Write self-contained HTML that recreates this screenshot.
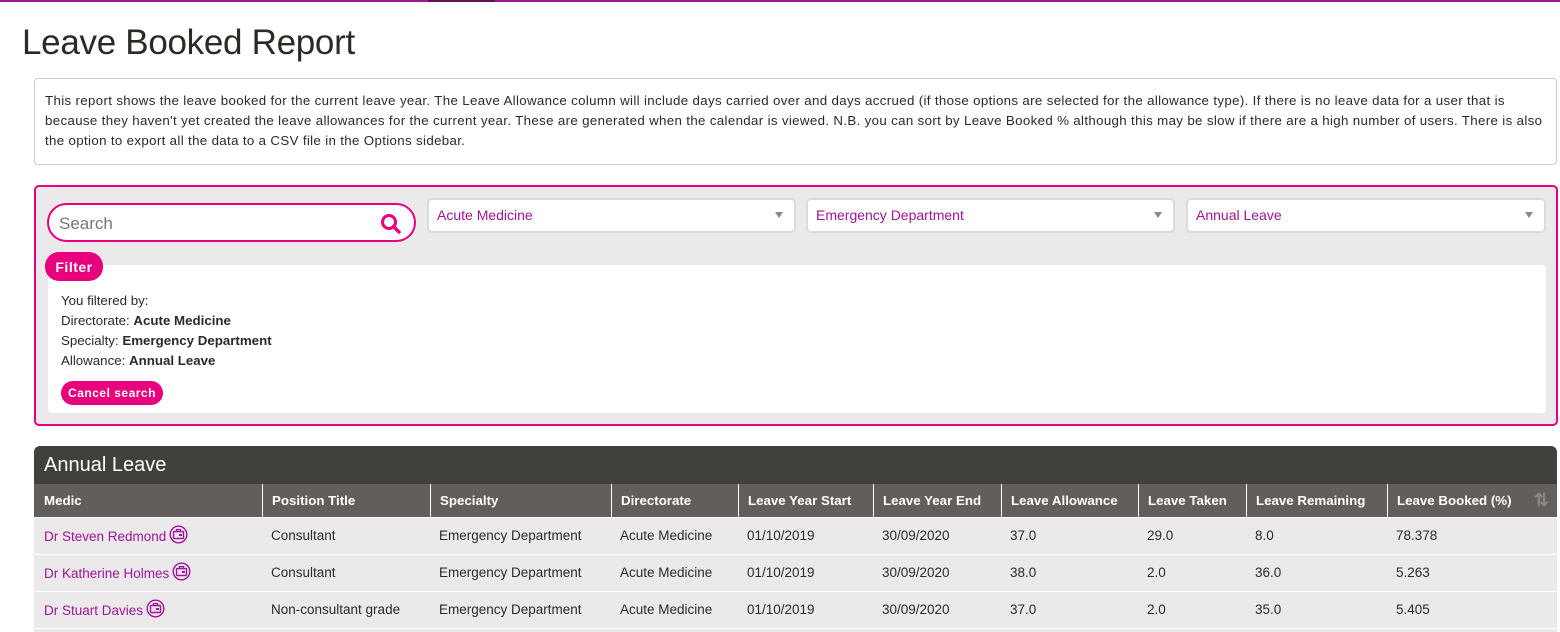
<!DOCTYPE html>
<html><head><meta charset="utf-8"><style>
*{box-sizing:border-box;margin:0;padding:0}
html,body{width:1560px;height:632px;overflow:hidden}
body{background:#fff;font-family:"Liberation Sans",sans-serif;color:#2b2a26;position:relative}
.top{position:absolute;left:0;top:0;width:1560px;height:2px;background:#9a1a94}
.top2{position:absolute;left:428px;top:0;width:67px;height:2px;background:#5a1456}
h1{position:absolute;left:22px;top:23px;font-weight:normal;font-size:35px;color:#2b2a26;letter-spacing:-0.3px}
.info{position:absolute;left:34px;top:78px;width:1523px;height:87px;border:1px solid #ccc;border-radius:4px;padding:12px 10px;font-size:13.3px;letter-spacing:0.34px;line-height:20px;color:#2b2a26}
.filt{position:absolute;left:34px;top:185px;width:1524px;height:241px;border:2px solid #e8007d;border-radius:5px;background:#ebe9ea}
.search{position:absolute;left:11px;top:16px;width:369px;height:39px;border:2px solid #e8007d;border-radius:20px;background:#fff;font-size:17px;color:#777;padding:9px 10px}
.sel{position:absolute;top:11px;height:35px;border:2px solid #dcdcdc;border-radius:5px;background:#fff;color:#a0149a;font-size:14px;padding:7px 8px}
.sel:after{content:"";position:absolute;right:11px;top:12px;border-left:4px solid transparent;border-right:4px solid transparent;border-top:6px solid #888}
.res{position:absolute;left:12px;top:78px;width:1498px;height:148px;background:#fff;border-radius:4px;font-size:13.3px;line-height:20px;padding:26px 13px}
.btn{position:absolute;background:#e8007d;color:#fff;border-radius:14px;font-weight:bold;letter-spacing:.5px}
.tbl{position:absolute;left:34px;top:446px;width:1523px}
.hd{height:38px;background:#42403d;border-radius:6px 6px 0 0;color:#fff;font-size:20px;padding:8px 10px}
.row{display:flex;height:37px;background:#ebe9ea;border-bottom:1px solid #fff;font-size:13.5px}
.row div{padding:10px 9px 0}
.ch{height:34px;background:#625e5b;color:#fff;font-weight:bold;font-size:13.3px}
.ch div{border-left:1px solid #fff;padding-top:9px}
.ch div:first-child{border-left:0}
.row div:first-child{padding-left:10px;padding-top:7px}
a{color:#a0149a;text-decoration:none}
.ic{display:inline-block;vertical-align:-3px;margin-left:3px}
</style></head><body>
<div class="top"></div><div class="top2"></div>
<h1>Leave Booked Report</h1>
<div class="info">This report shows the leave booked for the current leave year. The Leave Allowance column will include days carried over and days accrued (if those options are selected for the allowance type). If there is no leave data for a user that is because they haven't yet created the leave allowances for the current year. These are generated when the calendar is viewed. N.B. you can sort by Leave Booked % although this may be slow if there are a high number of users. There is also the option to export all the data to a CSV file in the Options sidebar.</div>
<div class="filt">
<div class="search">Search<svg style="position:absolute;right:12px;top:8px" width="22" height="22" viewBox="0 0 22 22"><circle cx="9" cy="9" r="6.5" fill="none" stroke="#e8007d" stroke-width="3"/><line x1="13.5" y1="13.5" x2="19" y2="19" stroke="#e8007d" stroke-width="3.5" stroke-linecap="round"/></svg></div>
<div class="sel" style="left:391px;width:369px">Acute Medicine</div>
<div class="sel" style="left:770px;width:369px">Emergency Department</div>
<div class="sel" style="left:1150px;width:360px">Annual Leave</div>
<div class="res">You filtered by:<br>Directorate: <b>Acute Medicine</b><br>Specialty: <b>Emergency Department</b><br>Allowance: <b>Annual Leave</b></div>
<div class="btn" style="left:9px;top:65px;width:58px;height:29px;font-size:14px;padding:7px 0;text-align:center">Filter</div>
<div class="btn" style="left:25px;top:194px;width:102px;height:24px;font-size:12px;padding:5px 0;text-align:center">Cancel search</div>
</div>
<div class="tbl">
<div class="hd">Annual Leave</div>
<div class="row ch"><div style="width:228px;padding-top:9px">Medic</div><div style="width:168px">Position Title</div><div style="width:181px">Specialty</div><div style="width:127px">Directorate</div><div style="width:135px">Leave Year Start</div><div style="width:128px">Leave Year End</div><div style="width:137px">Leave Allowance</div><div style="width:108px">Leave Taken</div><div style="width:141px">Leave Remaining</div><div style="width:170px;position:relative">Leave Booked (%)<span style="position:absolute;right:8px;top:6px;color:#8a8683;font-size:18px">⇅</span></div></div>
<div class="row"><div style="width:228px"><a>Dr Steven Redmond</a><svg class="ic" width="19" height="19" viewBox="0 0 19 19"><circle cx="9.5" cy="9.5" r="8.3" fill="none" stroke="#a0149a" stroke-width="1.4"/><rect x="4.5" y="6.5" width="10" height="7" rx="1" fill="none" stroke="#a0149a" stroke-width="1.4"/><rect x="7.5" y="4.5" width="4" height="2" fill="none" stroke="#a0149a" stroke-width="1.2"/><rect x="10" y="9" width="3" height="2" fill="#a0149a"/></svg></div><div style="width:168px">Consultant</div><div style="width:181px">Emergency Department</div><div style="width:127px">Acute Medicine</div><div style="width:135px">01/10/2019</div><div style="width:128px">30/09/2020</div><div style="width:137px">37.0</div><div style="width:108px">29.0</div><div style="width:141px">8.0</div><div style="width:170px">78.378</div></div>
<div class="row"><div style="width:228px"><a>Dr Katherine Holmes</a><svg class="ic" width="19" height="19" viewBox="0 0 19 19"><circle cx="9.5" cy="9.5" r="8.3" fill="none" stroke="#a0149a" stroke-width="1.4"/><rect x="4.5" y="6.5" width="10" height="7" rx="1" fill="none" stroke="#a0149a" stroke-width="1.4"/><rect x="7.5" y="4.5" width="4" height="2" fill="none" stroke="#a0149a" stroke-width="1.2"/><rect x="10" y="9" width="3" height="2" fill="#a0149a"/></svg></div><div style="width:168px">Consultant</div><div style="width:181px">Emergency Department</div><div style="width:127px">Acute Medicine</div><div style="width:135px">01/10/2019</div><div style="width:128px">30/09/2020</div><div style="width:137px">38.0</div><div style="width:108px">2.0</div><div style="width:141px">36.0</div><div style="width:170px">5.263</div></div>
<div class="row"><div style="width:228px"><a>Dr Stuart Davies</a><svg class="ic" width="19" height="19" viewBox="0 0 19 19"><circle cx="9.5" cy="9.5" r="8.3" fill="none" stroke="#a0149a" stroke-width="1.4"/><rect x="4.5" y="6.5" width="10" height="7" rx="1" fill="none" stroke="#a0149a" stroke-width="1.4"/><rect x="7.5" y="4.5" width="4" height="2" fill="none" stroke="#a0149a" stroke-width="1.2"/><rect x="10" y="9" width="3" height="2" fill="#a0149a"/></svg></div><div style="width:168px">Non-consultant grade</div><div style="width:181px">Emergency Department</div><div style="width:127px">Acute Medicine</div><div style="width:135px">01/10/2019</div><div style="width:128px">30/09/2020</div><div style="width:137px">37.0</div><div style="width:108px">2.0</div><div style="width:141px">35.0</div><div style="width:170px">5.405</div></div>
<div class="row" style="height:4px"></div>
</div>
</body></html>
